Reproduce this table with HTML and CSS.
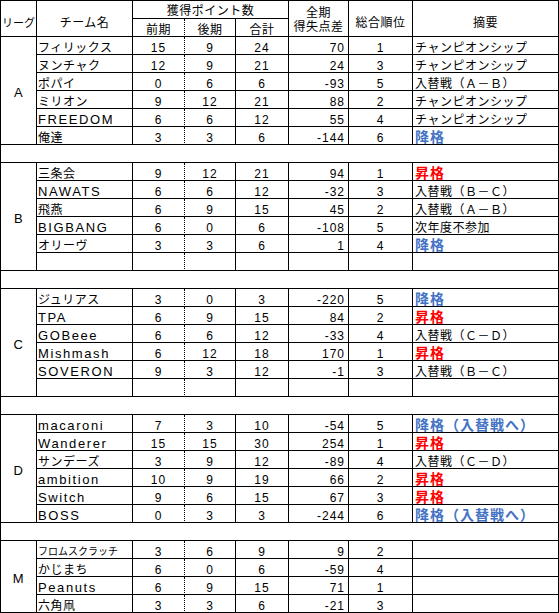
FILE: index.html
```html
<!DOCTYPE html>
<html lang="ja">
<head>
<meta charset="utf-8">
<title>リーグ成績</title>
<link rel="stylesheet" href="styles.css">
</head>
<body>
<table class="sheet">
<colgroup>
<col class="c1"><col class="c2"><col class="c3"><col class="c4"><col class="c5"><col class="c6"><col class="c7"><col class="c8">
</colgroup>
<thead>
<tr>
<th rowspan="2" class="h-lg">リーグ</th>
<th rowspan="2" class="h-big">チーム名</th>
<th colspan="3" class="h-top">獲得ポイント数</th>
<th rowspan="2" class="h-two">全期<br>得失点差</th>
<th rowspan="2" class="h-big">総合順位</th>
<th rowspan="2" class="h-big">摘要</th>
</tr>
<tr>
<th class="h-sub p1">前期</th>
<th class="h-sub">後期</th>
<th class="h-sub">合計</th>
</tr>
</thead>
<tbody>
<tr><td rowspan="6" class="lg">A</td><td class="nm">フィリックス</td><td class="n p1">15</td><td class="n">9</td><td class="n">24</td><td class="d">70</td><td class="r">1</td><td class="s">チャンピオンシップ</td></tr>
<tr><td class="nm">ヌンチャク</td><td class="n p1">12</td><td class="n">9</td><td class="n">21</td><td class="d">24</td><td class="r">3</td><td class="s">チャンピオンシップ</td></tr>
<tr><td class="nm">ポパイ</td><td class="n p1">0</td><td class="n">6</td><td class="n">6</td><td class="d">-93</td><td class="r">5</td><td class="s">入替戦（Ａ－Ｂ）</td></tr>
<tr><td class="nm">ミリオン</td><td class="n p1">9</td><td class="n">12</td><td class="n">21</td><td class="d">88</td><td class="r">2</td><td class="s">チャンピオンシップ</td></tr>
<tr><td class="nm en">FREEDOM</td><td class="n p1">6</td><td class="n">6</td><td class="n">12</td><td class="d">55</td><td class="r">4</td><td class="s">チャンピオンシップ</td></tr>
<tr><td class="nm">俺達</td><td class="n p1">3</td><td class="n">3</td><td class="n">6</td><td class="d">-144</td><td class="r">6</td><td class="s"><span class="dn">降格</span></td></tr>
<tr class="gap"><td colspan="8"></td></tr>

<tr><td rowspan="6" class="lg">B</td><td class="nm">三条会</td><td class="n p1">9</td><td class="n">12</td><td class="n">21</td><td class="d">94</td><td class="r">1</td><td class="s"><span class="up">昇格</span></td></tr>
<tr><td class="nm en">NAWATS</td><td class="n p1">6</td><td class="n">6</td><td class="n">12</td><td class="d">-32</td><td class="r">3</td><td class="s">入替戦（Ｂ－Ｃ）</td></tr>
<tr><td class="nm">飛燕</td><td class="n p1">6</td><td class="n">9</td><td class="n">15</td><td class="d">45</td><td class="r">2</td><td class="s">入替戦（Ａ－Ｂ）</td></tr>
<tr><td class="nm en">BIGBANG</td><td class="n p1">6</td><td class="n">0</td><td class="n">6</td><td class="d">-108</td><td class="r">5</td><td class="s">次年度不参加</td></tr>
<tr><td class="nm">オリーヴ</td><td class="n p1">3</td><td class="n">3</td><td class="n">6</td><td class="d">1</td><td class="r">4</td><td class="s"><span class="dn">降格</span></td></tr>
<tr><td class="nm"></td><td class="n p1"></td><td class="n"></td><td class="n"></td><td class="d"></td><td class="r"></td><td class="s"></td></tr>
<tr class="gap"><td colspan="8"></td></tr>

<tr><td rowspan="6" class="lg">C</td><td class="nm">ジュリアス</td><td class="n p1">3</td><td class="n">0</td><td class="n">3</td><td class="d">-220</td><td class="r">5</td><td class="s"><span class="dn">降格</span></td></tr>
<tr><td class="nm en">TPA</td><td class="n p1">6</td><td class="n">9</td><td class="n">15</td><td class="d">84</td><td class="r">2</td><td class="s"><span class="up">昇格</span></td></tr>
<tr><td class="nm en">GOBeee</td><td class="n p1">6</td><td class="n">6</td><td class="n">12</td><td class="d">-33</td><td class="r">4</td><td class="s">入替戦（Ｃ－Ｄ）</td></tr>
<tr><td class="nm en">Mishmash</td><td class="n p1">6</td><td class="n">12</td><td class="n">18</td><td class="d">170</td><td class="r">1</td><td class="s"><span class="up">昇格</span></td></tr>
<tr><td class="nm en">SOVERON</td><td class="n p1">9</td><td class="n">3</td><td class="n">12</td><td class="d">-1</td><td class="r">3</td><td class="s">入替戦（Ｂ－Ｃ）</td></tr>
<tr><td class="nm"></td><td class="n p1"></td><td class="n"></td><td class="n"></td><td class="d"></td><td class="r"></td><td class="s"></td></tr>
<tr class="gap"><td colspan="8"></td></tr>

<tr><td rowspan="6" class="lg">D</td><td class="nm en">macaroni</td><td class="n p1">7</td><td class="n">3</td><td class="n">10</td><td class="d">-54</td><td class="r">5</td><td class="s"><span class="dn">降格（入替戦へ）</span></td></tr>
<tr><td class="nm en">Wanderer</td><td class="n p1">15</td><td class="n">15</td><td class="n">30</td><td class="d">254</td><td class="r">1</td><td class="s"><span class="up">昇格</span></td></tr>
<tr><td class="nm">サンデーズ</td><td class="n p1">3</td><td class="n">9</td><td class="n">12</td><td class="d">-89</td><td class="r">4</td><td class="s">入替戦（Ｃ－Ｄ）</td></tr>
<tr><td class="nm en">ambition</td><td class="n p1">10</td><td class="n">9</td><td class="n">19</td><td class="d">66</td><td class="r">2</td><td class="s"><span class="up">昇格</span></td></tr>
<tr><td class="nm en">Switch</td><td class="n p1">9</td><td class="n">6</td><td class="n">15</td><td class="d">67</td><td class="r">3</td><td class="s"><span class="up">昇格</span></td></tr>
<tr><td class="nm en">BOSS</td><td class="n p1">0</td><td class="n">3</td><td class="n">3</td><td class="d">-244</td><td class="r">6</td><td class="s"><span class="dn">降格（入替戦へ）</span></td></tr>
<tr class="gap"><td colspan="8"></td></tr>

<tr><td rowspan="4" class="lg">M</td><td class="nm sq">フロムスクラッチ</td><td class="n p1">3</td><td class="n">6</td><td class="n">9</td><td class="d">9</td><td class="r">2</td><td class="s"></td></tr>
<tr><td class="nm">かじまち</td><td class="n p1">6</td><td class="n">0</td><td class="n">6</td><td class="d">-59</td><td class="r">4</td><td class="s"></td></tr>
<tr><td class="nm en">Peanuts</td><td class="n p1">6</td><td class="n">9</td><td class="n">15</td><td class="d">71</td><td class="r">1</td><td class="s"></td></tr>
<tr><td class="nm">六角凧</td><td class="n p1">3</td><td class="n">3</td><td class="n">6</td><td class="d">-21</td><td class="r">3</td><td class="s"></td></tr>
</tbody>
</table>
</body>
</html>
```

FILE: styles.css
```css
html, body {
  margin: 0;
  padding: 0;
  background: #ffffff;
}

.sheet {
  border-collapse: separate;
  border-spacing: 0;
  table-layout: fixed;
  width: 559px;
  border-top: 1px solid #000;
  border-left: 1px solid #000;
  font-family: "Liberation Sans", "Noto Sans CJK JP", sans-serif;
  font-size: 12px;
  color: #000;
}

.c1 { width: 36px; }
.c2 { width: 96px; }
.c3 { width: 52px; }
.c4 { width: 51px; }
.c5 { width: 53px; }
.c6 { width: 60px; }
.c7 { width: 64px; }
.c8 { width: 146px; }

.sheet tr {
  height: 18px;
}

.sheet th,
.sheet td {
  box-sizing: border-box;
  border-right: 1px solid #000;
  border-bottom: 1px solid #000;
  padding: 0;
  white-space: nowrap;
  overflow: visible;
  font-weight: normal;
  line-height: 12px;
  vertical-align: bottom;
  letter-spacing: 0.5px;
}

.sheet .p1 {
  border-right-style: dotted;
}

.sheet .h-lg {
  text-align: left;
  padding-left: 1px;
  font-size: 11px;
  letter-spacing: 0;
}
.sheet .h-lg,
.sheet .h-big {
  vertical-align: middle;
  line-height: 14px;
  padding-top: 9px;
}
.sheet .h-big {
  text-align: center;
}
.sheet .h-top {
  text-align: center;
  vertical-align: middle;
  line-height: 14px;
  padding-top: 2px;
}
.sheet .h-two {
  text-align: center;
  vertical-align: middle;
  line-height: 14px;
  padding-top: 2px;
}
.sheet .h-sub {
  text-align: center;
}

.sheet .lg {
  text-align: center;
  vertical-align: middle;
  font-size: 13px;
  line-height: 14px;
  padding-top: 4px;
}
.sheet .nm {
  text-align: left;
  padding-left: 1px;
}
.sheet .en {
  font-size: 13px;
  letter-spacing: 1.6px;
}
.sheet .sq {
  font-size: 10px;
  letter-spacing: 0;
}
.sheet .n {
  text-align: center;
  letter-spacing: 1px;
}
.sheet .d {
  text-align: right;
  padding-right: 3px;
  letter-spacing: 1px;
}
.sheet .r {
  text-align: center;
  letter-spacing: 1px;
}
.sheet .s {
  text-align: left;
  padding-left: 2px;
}

.dn,
.up {
  font-weight: bold;
  font-size: 14px;
  letter-spacing: 1px;
}
.dn { color: #4472c4; }
.up { color: #ff0000; }
```
